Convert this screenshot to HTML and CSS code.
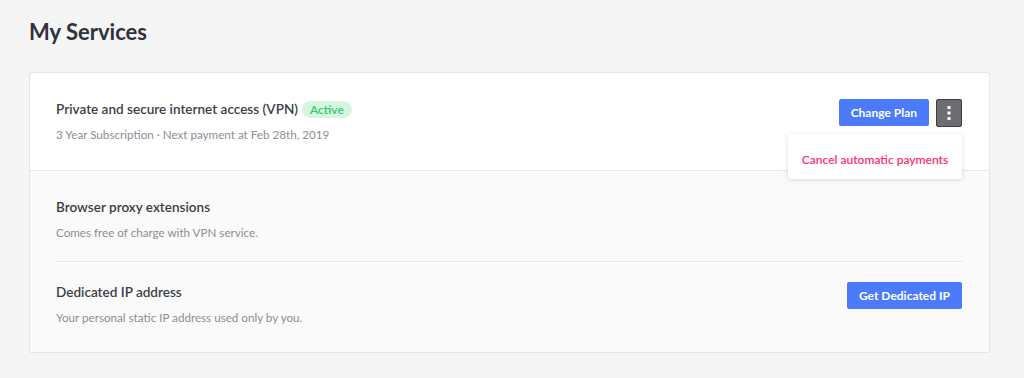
FILE: index.html
```html
<!DOCTYPE html>
<html lang="en">
  <head>
    <meta charset="UTF-8" />
    <meta name="viewport" content="width=device-width, initial-scale=1.0" />
    <title>My Services</title>
    <link rel="stylesheet" href="styles.css">
  </head>
  <body>
    <div class="page">
      <h1 class="title">My Services</h1>

      <div class="card">
        <div class="row main">
          <div class="info">
            <div class="name">
              Private and secure internet access (VPN)
              <span class="badge">Active</span>
            </div>
            <div class="desc">3 Year Subscription · Next payment at Feb 28th, 2019</div>
          </div>
          <div class="actions">
            <button class="btn">Change Plan</button>
            <button class="more">
              <svg width="4" height="14" viewBox="0 0 4 14">
                <rect x="0.5" y="0" width="3" height="3" fill="#fff" />
                <rect x="0.5" y="5.5" width="3" height="3" fill="#fff" />
                <rect x="0.5" y="11" width="3" height="3" fill="#fff" />
              </svg>
            </button>
            <div class="menu">
              <a href="#" class="menu-item">Cancel automatic payments</a>
            </div>
          </div>
        </div>

        <div class="extra">
          <div class="row">
            <div class="info">
              <div class="name">Browser proxy extensions</div>
              <div class="desc">Comes free of charge with VPN service.</div>
            </div>
          </div>
          <div class="row">
            <div class="info">
              <div class="name">Dedicated IP address</div>
              <div class="desc">Your personal static IP address used only by you.</div>
            </div>
            <div class="actions">
              <button class="btn">Get Dedicated IP</button>
            </div>
          </div>
        </div>
      </div>
    </div>
  </body>
</html>
```

FILE: styles.css
```css
* {
  box-sizing: border-box;
  margin: 0px;
  padding: 0px;
}
body {
  background-color: #f5f5f5;
  font-family: Lato, "Noto Sans", sans-serif;
  color: #3b3e46;
}
.page {
  padding: 20px 34px 0 29px;
}
.title {
  font-size: 22px;
  font-weight: 700;
  color: #2f323a;
  line-height: 24px;
  margin-bottom: 28px;
}
.card {
  background-color: #fafafa;
  border: 1px solid #e6e6e6;
  border-radius: 3px;
  box-shadow: 0 1px 2px rgba(0, 0, 0, 0.06);
}
.row {
  display: flex;
  align-items: flex-start;
  justify-content: space-between;
}
.main {
  background-color: #fff;
  border-bottom: 1px solid #e8e8e8;
  padding: 26px 27px 27px 26px;
  border-radius: 3px 3px 0 0;
}
.name {
  font-size: 13.55px;
  font-weight: 600;
  line-height: 20px;
  display: flex;
  align-items: center;
  gap: 4px;
}
.desc {
  font-size: 11.65px;
  color: #8b8e94;
  line-height: 16px;
  margin-top: 8px;
}
.badge {
  background-color: #d7f6e1;
  color: #2ccb68;
  font-size: 12px;
  font-weight: 600;
  border-radius: 9px;
  padding: 0 8px;
  line-height: 17px;
}
.actions {
  display: flex;
  gap: 7px;
  position: relative;
}
.btn {
  background-color: #4b7bfa;
  color: #fff;
  border: none;
  border-radius: 2px;
  font-family: inherit;
  font-size: 12px;
  font-weight: 700;
  height: 27px;
  padding: 0 12px;
}
.more {
  width: 26px;
  height: 28px;
  background-color: #6c6d71;
  border: 1px solid #3d3d40;
  border-radius: 2px;
  display: flex;
  align-items: center;
  justify-content: center;
}
.menu {
  position: absolute;
  top: 35px;
  right: 0;
  width: 174px;
  background-color: #fff;
  border-radius: 3px;
  box-shadow: 0 1px 5px rgba(0, 0, 0, 0.14);
  padding: 14px 0 12px;
  text-align: center;
}
.menu-item {
  font-size: 12px;
  font-weight: 600;
  color: #ff2e6a;
  text-decoration: none;
}
.extra {
  padding: 0 27px 0 26px;
}
.extra .row {
  padding: 26px 0 20px;
}
.extra .row + .row {
  border-top: 1px solid #e6e6e6;
  padding: 20px 0 26px;
}
```
